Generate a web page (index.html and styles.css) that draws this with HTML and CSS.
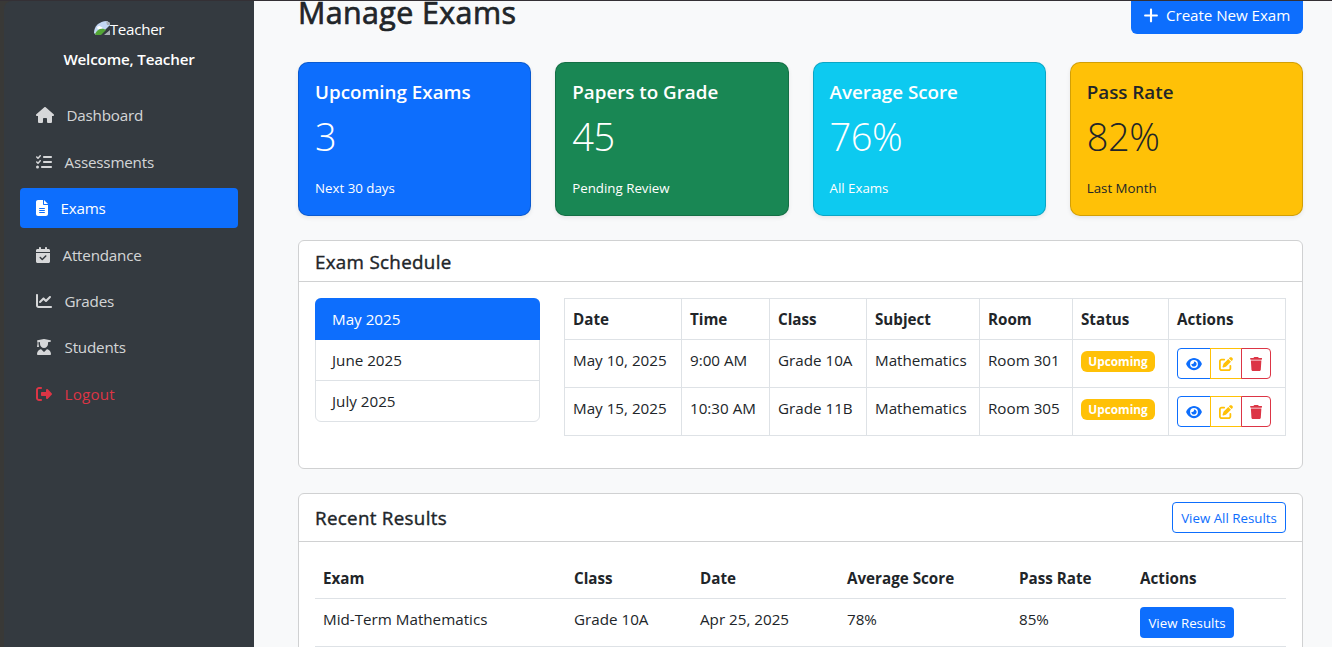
FILE: index.html
```html
<!DOCTYPE html>
<html lang="en">
<head>
<meta charset="utf-8">
<title>Manage Exams</title>
<link rel="stylesheet" href="styles.css">
</head>
<body>
<svg class="sprite" aria-hidden="true">
  <symbol id="home" viewBox="0 0 576 512"><path d="M575.8 255.5c0 18-15 32.1-32 32.1h-32l.7 160.2c0 2.7-.2 5.4-.5 8.1V472c0 22.1-17.9 40-40 40H392c-22.1 0-40-17.9-40-40V384c0-17.7-14.3-32-32-32H256c-17.7 0-32 14.3-32 32v88c0 22.1-17.9 40-40 40H104c-22.1 0-40-17.9-40-40V287.6H32c-18 0-32-14-32-32.1c0-9 3-17 10-24L266.4 8c7-7 15-8 22-8s15 2 21 7L564.8 231.5c8 7 12 15 11 24z"/></symbol>
  <symbol id="tasks" viewBox="0 0 512 512"><path d="M152.1 38.2c9.9 8.9 10.7 24 1.8 33.9l-72 80c-4.4 4.9-10.6 7.8-17.2 7.9s-12.9-2.4-17.6-7L7 113C-2.3 103.6-2.3 88.4 7 79s24.6-9.4 33.9 0l22.1 22.1 55.1-61.2c8.9-9.9 24-10.7 33.9-1.8zm0 160c9.9 8.9 10.7 24 1.8 33.9l-72 80c-4.4 4.9-10.6 7.8-17.2 7.9s-12.9-2.4-17.6-7L7 273c-9.4-9.4-9.4-24.6 0-33.9s24.6-9.4 33.9 0l22.1 22.1 55.1-61.2c8.9-9.9 24-10.7 33.9-1.8zM224 96c0-17.7 14.3-32 32-32H480c17.7 0 32 14.3 32 32s-14.3 32-32 32H256c-17.7 0-32-14.3-32-32zm0 160c0-17.7 14.3-32 32-32H480c17.7 0 32 14.3 32 32s-14.3 32-32 32H256c-17.7 0-32-14.3-32-32zM160 416c0-17.7 14.3-32 32-32H480c17.7 0 32 14.3 32 32s-14.3 32-32 32H192c-17.7 0-32-14.3-32-32zM48 368a48 48 0 1 1 0 96 48 48 0 1 1 0-96z"/></symbol>
  <symbol id="file" viewBox="0 0 384 512"><path d="M64 0C28.7 0 0 28.7 0 64V448c0 35.3 28.7 64 64 64H320c35.3 0 64-28.7 64-64V160H256c-17.7 0-32-14.3-32-32V0H64zM256 0V128H384L256 0zM112 256H272c8.8 0 16 7.2 16 16s-7.2 16-16 16H112c-8.8 0-16-7.2-16-16s7.2-16 16-16zm0 64H272c8.8 0 16 7.2 16 16s-7.2 16-16 16H112c-8.8 0-16-7.2-16-16s7.2-16 16-16zm0 64H272c8.8 0 16 7.2 16 16s-7.2 16-16 16H112c-8.8 0-16-7.2-16-16s7.2-16 16-16z"/></symbol>
  <symbol id="calendar" viewBox="0 0 448 512"><path d="M128 0c17.7 0 32 14.3 32 32V64H288V32c0-17.7 14.3-32 32-32s32 14.3 32 32V64h48c26.5 0 48 21.5 48 48v48H0V112C0 85.5 21.5 64 48 64H96V32c0-17.7 14.3-32 32-32zM0 192H448V464c0 26.5-21.5 48-48 48H48c-26.5 0-48-21.5-48-48V192zM329 305c9.4-9.4 9.4-24.6 0-33.9s-24.6-9.4-33.9 0l-95 95-47-47c-9.4-9.4-24.6-9.4-33.9 0s-9.4 24.6 0 33.9l64 64c9.4 9.4 24.6 9.4 33.9 0L329 305z"/></symbol>
  <symbol id="chart" viewBox="0 0 512 512"><path d="M64 64c0-17.7-14.3-32-32-32S0 46.3 0 64V400c0 44.2 35.8 80 80 80H480c17.7 0 32-14.3 32-32s-14.3-32-32-32H80c-8.8 0-16-7.2-16-16V64zm406.6 86.6c12.5-12.5 12.5-32.8 0-45.3s-32.8-12.5-45.3 0L320 210.7l-57.4-57.4c-12.5-12.5-32.8-12.5-45.3 0l-112 112c-12.5 12.5-12.5 32.8 0 45.3s32.8 12.5 45.3 0L240 221.3l57.4 57.4c12.5 12.5 32.8 12.5 45.3 0l128-128z"/></symbol>
  <symbol id="graduate" viewBox="0 0 448 512"><path d="M219.3 .5c3.1-.6 6.3-.6 9.4 0l200 40C439.9 42.7 448 52.6 448 64s-8.1 21.3-19.3 23.5L352 102.9V160c0 70.7-57.3 128-128 128s-128-57.3-128-128V102.9L48 93.3v65.1l15.7 78.4c.9 4.7-.3 9.6-3.3 13.3s-7.6 5.9-12.4 5.9H16c-4.8 0-9.3-2.1-12.4-5.9s-4.3-8.6-3.3-13.3L16 158.4V86.6C6.5 83.3 0 74.3 0 64C0 52.6 8.1 42.7 19.3 40.5l200-40zM111.9 327.7c10.5-3.4 21.8 .4 29.4 8.5l71 75.5c6.3 6.7 17 6.7 23.3 0l71-75.5c7.6-8.1 18.9-11.9 29.4-8.5C401 348.6 448 409.4 448 481.3c0 17-13.8 30.7-30.7 30.7H30.7C13.8 512 0 498.2 0 481.3c0-71.9 47-132.7 111.9-153.6z"/></symbol>
  <symbol id="logout" viewBox="0 0 512 512"><path d="M377.9 105.9L500.7 228.7c7.2 7.2 11.3 17.1 11.3 27.3s-4.1 20.1-11.3 27.3L377.9 406.1c-6.4 6.4-15 9.9-24 9.9c-18.7 0-33.9-15.2-33.9-33.9V320H192c-17.7 0-32-14.3-32-32v-64c0-17.7 14.3-32 32-32h128v-62.1c0-18.7 15.2-33.9 33.9-33.9c9 0 17.6 3.6 24 9.9zM160 96H96c-17.7 0-32 14.3-32 32v256c0 17.7 14.3 32 32 32h64c17.7 0 32 14.3 32 32s-14.3 32-32 32H96c-53 0-96-43-96-96V128C0 75 43 32 96 32h64c17.7 0 32 14.3 32 32s-14.3 32-32 32z"/></symbol>
  <symbol id="plus" viewBox="0 0 448 512"><path d="M256 80c0-17.7-14.3-32-32-32s-32 14.3-32 32v144H48c-17.7 0-32 14.3-32 32s14.3 32 32 32h144v144c0 17.7 14.3 32 32 32s32-14.3 32-32V288h144c17.7 0 32-14.3 32-32s-14.3-32-32-32H256V80z"/></symbol>
  <symbol id="eye" viewBox="0 0 576 512"><path d="M288 32c-80.8 0-145.5 36.8-192.6 80.6C48.6 156 17.3 208 2.5 243.7c-3.3 7.9-3.3 16.7 0 24.6C17.3 304 48.6 356 95.4 399.4C142.5 443.2 207.2 480 288 480s145.5-36.8 192.6-80.6c46.8-43.5 78.1-95.4 93-131.1c3.3-7.9 3.3-16.7 0-24.6c-14.9-35.7-46.2-87.7-93-131.1C433.5 68.8 368.8 32 288 32zM144 256a144 144 0 1 1 288 0 144 144 0 1 1 -288 0zm144-64c0 35.3-28.7 64-64 64c-7.1 0-13.9-1.2-20.3-3.3c-5.5-1.8-11.9 1.6-11.7 7.4c.3 6.9 1.3 13.8 3.2 20.7c13.7 51.2 66.4 81.6 117.6 67.9s81.6-66.4 67.9-117.6c-11.1-41.5-47.8-69.4-88.6-71.1c-5.8-.2-9.2 6.1-7.4 11.7c2.1 6.4 3.3 13.2 3.3 20.3z"/></symbol>
  <symbol id="edit" viewBox="0 0 512 512"><path d="M471.6 21.7c-21.9-21.9-57.3-21.9-79.2 0L362.3 51.7l97.9 97.9 30.1-30.1c21.9-21.9 21.9-57.3 0-79.2L471.6 21.7zm-299.2 220c-6.1 6.1-10.8 13.6-13.5 21.9l-29.6 88.8c-2.9 8.6-.6 18.1 5.8 24.6s15.9 8.7 24.6 5.8l88.8-29.6c8.2-2.7 15.7-7.4 21.9-13.5L437.7 172.3 339.7 74.3 172.4 241.7zM96 64C43 64 0 107 0 160V416c0 53 43 96 96 96H352c53 0 96-43 96-96V320c0-17.7-14.3-32-32-32s-32 14.3-32 32v96c0 17.7-14.3 32-32 32H96c-17.7 0-32-14.3-32-32V160c0-17.7 14.3-32 32-32h96c17.7 0 32-14.3 32-32s-14.3-32-32-32H96z"/></symbol>
  <symbol id="trash" viewBox="0 0 448 512"><path d="M135.2 17.7L128 32H32C14.3 32 0 46.3 0 64S14.3 96 32 96H416c17.7 0 32-14.3 32-32s-14.3-32-32-32H320l-7.2-14.3C307.4 6.8 296.3 0 284.2 0H163.8c-12.1 0-23.2 6.8-28.6 17.7zM416 128H32L53.2 467c1.6 25.3 22.6 45 47.9 45H346.9c25.3 0 46.3-19.7 47.9-45L416 128z"/></symbol>
</svg>
<div class="app">
  <aside class="sidebar">
    <div class="avatar">
      <svg class="avatar-img" viewBox="0 0 16 14"><path fill="#c3d7f3" d="M0 12C0 5 5 .5 13 0l3 2v2L6 14H2z"/><path fill="#fff" d="M3 7c0-2 3-3 4-1 2 0 2 2 0 2H4z"/><path fill="#52a535" d="M1 13c2-4 5-6 9-5l2 1-5 5H2z"/><path fill="#a9b0b6" d="M12 0l4 2v2h-3zM10 14l6-5v5z"/></svg><span>Teacher</span>
    </div>
    <div class="welcome">Welcome, Teacher</div>
    <nav class="nav">
      <a class="nav-link"><svg class="w18"><use href="#home"/></svg>Dashboard</a>
      <a class="nav-link"><svg class="w16"><use href="#tasks"/></svg>Assessments</a>
      <a class="nav-link active"><svg class="w12"><use href="#file"/></svg>Exams</a>
      <a class="nav-link"><svg class="w14"><use href="#calendar"/></svg>Attendance</a>
      <a class="nav-link"><svg class="w16"><use href="#chart"/></svg>Grades</a>
      <a class="nav-link"><svg class="w16"><use href="#graduate"/></svg>Students</a>
      <a class="nav-link logout"><svg class="w16"><use href="#logout"/></svg>Logout</a>
    </nav>
  </aside>
  <main class="main">
    <header class="page-head">
      <h1>Manage Exams</h1>
      <button class="btn-create"><svg><use href="#plus"/></svg>Create New Exam</button>
    </header>
    <section class="stats">
      <div class="stat blue"><h5>Upcoming Exams</h5><div class="num">3</div><small>Next 30 days</small></div>
      <div class="stat green"><h5>Papers to Grade</h5><div class="num">45</div><small>Pending Review</small></div>
      <div class="stat cyan"><h5>Average Score</h5><div class="num">76%</div><small>All Exams</small></div>
      <div class="stat yellow"><h5>Pass Rate</h5><div class="num">82%</div><small>Last Month</small></div>
    </section>
    <section class="card schedule">
      <div class="card-head"><h5>Exam Schedule</h5></div>
      <div class="card-body">
        <div class="months"><a class="on">May 2025</a><a>June 2025</a><a>July 2025</a></div>
        <table class="grid">
          <colgroup><col class="g1"><col class="g2"><col class="g3"><col class="g4"><col class="g5"><col class="g6"><col class="g7"></colgroup>
          <tr><th>Date</th><th>Time</th><th>Class</th><th>Subject</th><th>Room</th><th>Status</th><th>Actions</th></tr>
          <tr><td>May 10, 2025</td><td>9:00 AM</td><td>Grade 10A</td><td>Mathematics</td><td>Room 301</td><td><span class="badge">Upcoming</span></td><td><div class="group"><button class="view"><svg><use href="#eye"/></svg></button><button class="edit"><svg><use href="#edit"/></svg></button><button class="del"><svg><use href="#trash"/></svg></button></div></td></tr>
          <tr><td>May 15, 2025</td><td>10:30 AM</td><td>Grade 11B</td><td>Mathematics</td><td>Room 305</td><td><span class="badge">Upcoming</span></td><td><div class="group"><button class="view"><svg><use href="#eye"/></svg></button><button class="edit"><svg><use href="#edit"/></svg></button><button class="del"><svg><use href="#trash"/></svg></button></div></td></tr>
        </table>
      </div>
    </section>
    <section class="card results">
      <div class="card-head"><h5>Recent Results</h5><button class="btn-outline">View All Results</button></div>
      <div class="card-body">
        <table class="lines">
          <colgroup><col class="r1"><col class="r2"><col class="r3"><col class="r4"><col class="r5"><col class="r6"></colgroup>
          <tr><th>Exam</th><th>Class</th><th>Date</th><th>Average Score</th><th>Pass Rate</th><th>Actions</th></tr>
          <tr><td>Mid-Term Mathematics</td><td>Grade 10A</td><td>Apr 25, 2025</td><td>78%</td><td>85%</td><td><button class="btn-small">View Results</button></td></tr>
        </table>
      </div>
    </section>
  </main>
</div>
</body>
</html>
```
FILE: styles.css
```css
* { box-sizing: border-box; }
html, body { margin: 0; height: 647px; overflow: hidden; }
body { font: 15.2px/24px "Open Sans", "Noto Sans", sans-serif; color: #212529; background: #f8f9fa; }
h1, h5 { margin: 0; font-weight: 500; }
button { font-family: inherit; margin: 0; }
svg { fill: currentColor; display: block; flex: none; }
.sprite { display: none; }
.app { display: flex; height: 647px; overflow: hidden; border-top: 1px solid #343035; background: linear-gradient(to right, #393937 40px, #f8f9fa 40px); }
.sidebar { width: 250px; margin-left: 4px; background: #343a40; border-top-left-radius: 8px; padding: 16px 16px 0; color: #fff; }
.avatar { display: flex; justify-content: center; height: 24px; }
.avatar-img { width: 16px; height: 14px; margin-top: 4px; }
.avatar span { letter-spacing: -0.3px; }
.welcome { text-align: center; font-weight: 600; letter-spacing: -0.18px; margin-top: 6px; height: 24px; }
.nav { display: flex; flex-direction: column; gap: 6.4px; margin-top: 24.4px; }
.nav-link { display: flex; align-items: center; height: 40px; padding: 0 16px; border-radius: 4px; color: rgba(255,255,255,.8); letter-spacing: -0.2px; }
.nav-link svg { height: 16px; margin-right: 12.5px; }
.w18 { width: 18px; } .w16 { width: 16px; } .w14 { width: 14px; } .w12 { width: 12px; }
.nav-link.active { background: #0d6efd; color: #fff; }
.nav-link.logout { color: #dc3545; letter-spacing: 0.2px; }
.main { flex: 1; padding: 0 29px 0 44px; min-width: 0; }
.page-head { display: flex; justify-content: space-between; height: 38px; margin-top: -5px; }
h1 { font-size: 30.4px; line-height: 34px; letter-spacing: 0.4px; -webkit-text-stroke: 0.7px; }
.btn-create { display: flex; align-items: center; width: 172px; height: 38px; padding: 0 12px; border: 0; border-radius: 6px; background: #0d6efd; color: #fff; font-size: 15.2px; letter-spacing: -0.07px; white-space: nowrap; }
.btn-create svg { width: 16px; height: 17px; margin-right: 7px; }
.stats { display: grid; grid-template-columns: repeat(4, 1fr); gap: 24px; margin-top: 28px; }
.stat { height: 154px; padding: 17px 16px; border: 1px solid rgba(0,0,0,.176); border-radius: 10px; color: #fff; box-shadow: 0 2px 4px rgba(0,0,0,.075); }
.stat h5 { font-size: 18.8px; line-height: 24px; font-weight: 600; }
.num { font-size: 38px; line-height: 48px; font-weight: 300; letter-spacing: -0.5px; margin-top: 8px; }
.stat small { display: block; font-size: 13.3px; line-height: 21px; margin-top: 18px; }
.blue { background: #0d6efd; } .green { background: #198754; } .cyan { background: #0dcaf0; } .yellow { background: #ffc107; color: #212529; }
.card { background: #fff; border: 1px solid #d0d1d2; border-radius: 6px; margin-top: 24px; }
.card-head { display: flex; align-items: center; justify-content: space-between; padding: 0 16px; border-bottom: 1px solid #d0d1d2; }
.card-head h5 { font-size: 18.8px; line-height: 24px; letter-spacing: 0.3px; -webkit-text-stroke: 0.4px; padding-top: 1px; }
.schedule { height: 229px; }
.schedule .card-head { height: 41px; }
.schedule .card-body { display: flex; gap: 24px; padding: 16px; }
.months { flex: none; width: 225px; height: 124px; display: flex; flex-direction: column; border: 1px solid #dee2e6; border-radius: 6px; }
.months a { height: 41px; line-height: 40px; padding-left: 16px; }
.months a + a + a { border-top: 1px solid #dee2e6; }
.months .on { background: #0d6efd; color: #fff; margin: -1px -1px 0; height: 42px; line-height: 43px; padding-left: 17px; border-radius: 6px 6px 0 0; }
table { border-collapse: collapse; table-layout: fixed; }
th, td { text-align: left; vertical-align: top; padding: 8px 0 0 8px; white-space: nowrap; }
th { font-weight: 700; }
.grid { width: 722px; height: 138px; }
.grid th, .grid td { border: 1px solid #dee2e6; height: 48px; }
.grid th { height: 41px; }
.g1 { width: 117px; } .g2 { width: 88px; } .g3 { width: 97px; } .g4 { width: 113px; } .g5 { width: 93px; } .g6 { width: 96px; } .g7 { width: 117px; }
.badge { display: block; width: 74px; height: 21px; margin-top: 3px; border-radius: 6px; background: #ffc107; color: #fff; font-weight: 700; font-size: 11.8px; line-height: 21px; text-align: center; }
.group { display: flex; }
.group button { display: flex; align-items: center; justify-content: center; height: 31px; padding: 0; border: 1px solid; background: #fff; }
.group svg { height: 14px; }
.view { width: 34px; color: #0d6efd; border-radius: 4px 0 0 4px; }
.group .edit { width: 32px; margin-left: -1px; color: #ffc107; }
.group .del { width: 30px; margin-left: -1px; color: #dc3545; border-radius: 0 4px 4px 0; }
.view svg { width: 16px; } .edit svg { width: 14px; } .del svg { width: 12.25px; }
.results { height: 240px; }
.results .card-head { height: 48px; }
.btn-outline { width: 114px; height: 31px; padding: 0; border: 1px solid #0d6efd; border-radius: 4px; background: #fff; color: #0d6efd; font-size: 13.3px; white-space: nowrap; }
.results .card-body { padding: 16px; }
.lines { width: 971px; }
.lines th, .lines td { border-bottom: 1px solid #dee2e6; height: 48px; }
.lines th { height: 40px; }
.r1 { width: 251px; } .r2 { width: 126px; } .r3 { width: 147px; } .r4 { width: 172px; } .r5 { width: 121px; } .r6 { width: 154px; }
.btn-small { display: block; width: 94px; height: 31px; padding: 1px 0 0; border: 0; border-radius: 4px; background: #0d6efd; color: #fff; font-size: 13.3px; white-space: nowrap; }
```
